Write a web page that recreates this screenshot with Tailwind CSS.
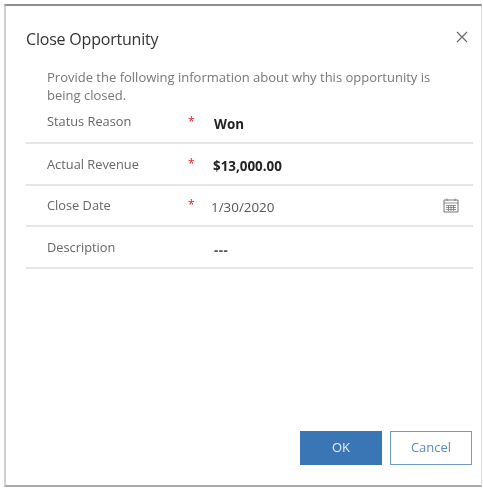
<!doctype html>
<html><head><meta charset="utf-8"><script src="https://cdn.jsdelivr.net/npm/@tailwindcss/browser@4"></script></head>
<body class="bg-white">
<div class="w-[483px] h-[491px] bg-white pt-1 pl-1 pr-[1px] pb-1 overflow-hidden font-['Open_Sans',sans-serif]">
  <div class="relative w-full h-[483px] flex flex-col border-t-2 border-t-[#8f8f8f] border-b-2 border-b-[#a8a8a8] border-l-2 border-l-[#d0d0d0] border-r border-r-[#dcdcdc] pl-5 pr-[8px] blur-[0.4px]">
    <div class="flex justify-between items-start h-[59px] pt-[21px]">
      <h1 class="text-[16px] leading-[24px] text-[#333] tracking-[-0.2px]">Close Opportunity</h1>
      <svg class="w-[14px] h-[14px] mt-[3px] mr-[4px]" viewBox="0 0 14 14" fill="none" stroke="#666" stroke-width="1.1"><path d="M2 2 L12 12 M12 2 L2 12"/></svg>
    </div>
    <p class="pl-[21px] text-[13px] leading-[18px] text-[#777] pt-[3px] pr-[30px]">Provide the following information about why this opportunity is being closed.</p>
    <div class="flex items-center h-[42px] border-b-2 border-[#e6e6e6] text-[12.8px] -mt-[2px]">
      <span class="w-[162px] pl-[21px] text-[#666] mt-[0px]">Status Reason</span>
      <span class="w-[26px] text-[#e02020] text-[12px] -mt-[1px]">*</span>
      <span class="font-bold text-[#222] text-[13.4px] mt-[5px]">Won</span>
    </div>
    <div class="flex items-center h-[42px] border-b-2 border-[#e6e6e6] text-[12.8px]">
      <span class="w-[162px] pl-[21px] text-[#666] mt-[1px]">Actual Revenue</span>
      <span class="w-[25px] text-[#e02020] text-[12px] -mt-[1px]">*</span>
      <span class="font-bold text-[#222] text-[13.4px] mt-[5px]">$13,000.00</span>
    </div>
    <div class="flex items-center h-[41px] border-b-2 border-[#e6e6e6] text-[12.8px]">
      <span class="w-[162px] pl-[21px] text-[#666] mt-[0px]">Close Date</span>
      <span class="w-[23px] text-[#e02020] text-[12px] -mt-[2px]">*</span>
      <span class="text-[#555] text-[13.4px] mt-[3px]">1/30/2020</span>
      <svg class="ml-auto mr-[14px] -mt-[2px] w-[16px] h-[16px]" viewBox="0 0 16 16" fill="none" stroke="#777" stroke-width="1"><path d="M1 3H15V15H1Z"/><path d="M1 6H15M4 1.500V4M12 1.500V4M3 8.500H13M3 10.500H13M3 12.500H13M5.500 8V14M8 8V14M10.500 8V14" stroke-width="0.8"/></svg>
    </div>
    <div class="flex items-center h-[42px] border-b-2 border-[#e6e6e6] text-[12.8px]">
      <span class="w-[188px] pl-[21px] text-[#666] mt-[1px]">Description</span>
      <span class="font-bold text-[#555] text-[13.4px] tracking-[0.5px] mt-[6px]">---</span>
    </div>
    <div class="flex justify-end gap-[8px] mt-auto mb-[20px] mr-[1px]">
      <button class="w-[82px] h-[34px] bg-[#3a76b5] text-[#e8eef5] text-[13px]">OK</button>
      <button class="w-[82px] h-[34px] bg-white border border-[#6f9bc8] text-[#5a8cbf] text-[13px]">Cancel</button>
    </div>
  </div>
</div>
</body></html>
